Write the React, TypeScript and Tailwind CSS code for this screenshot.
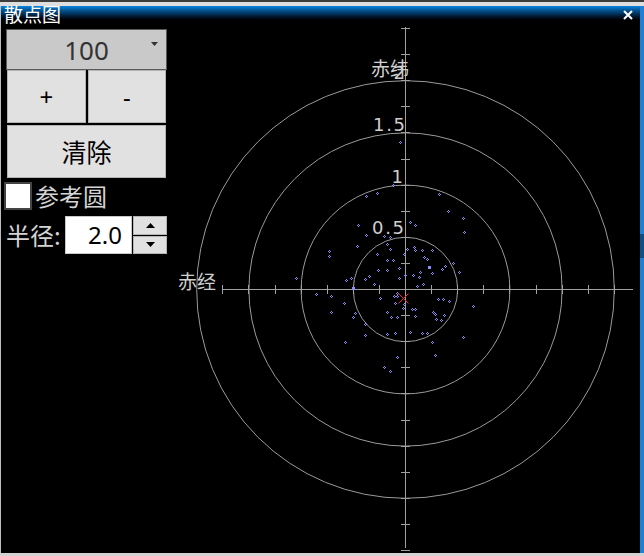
import React from "react";

const PTS: [number, number][] = [
  [400,142],[393,185],[366,196],[377,193],[439,194],[448,211],[463,218],[464,232],[358,225],[366,235],
  [410,222],[415,225],[384,236],[390,237],[329,251],[329,256],[357,246],[387,244],[390,249],[407,249],
  [414,247],[415,250],[422,250],[432,250],[377,254],[404,254],[424,257],[427,259],[387,260],[393,260],
  [453,263],[445,266],[399,268],[378,270],[387,270],[442,269],[420,272],[432,273],[459,272],[413,275],
  [405,275],[369,276],[365,279],[399,278],[419,277],[351,278],[346,280],[296,278],[423,284],[417,286],
  [374,284],[353,288],[316,294],[331,296],[380,298],[397,296],[395,303],[438,299],[443,299],[449,301],
  [344,303],[331,312],[355,313],[353,317],[412,309],[415,309],[403,308],[415,316],[387,312],[391,317],
  [397,317],[433,312],[435,314],[444,315],[404,304],[436,319],[441,320],[473,306],[463,337],[365,324],
  [365,335],[387,334],[395,333],[410,332],[422,333],[427,333],[345,342],[432,342],[435,355],[397,357],
  [384,367],[390,371],[394,296],[397,293],
];

const CX = 405;
const CY = 289;
const U = 26.1;

function Plot() {
  const ticksV: number[] = [];
  for (let k = -10; k <= 10; k++) if (k !== 0) ticksV.push(Math.round(CY + k * U));
  const ticksH: number[] = [];
  for (let k = -7; k <= 8; k++) if (k !== 0) ticksH.push(Math.round(CX + k * U));
  const dot = "#8c8cff";
  const gray = "#a0a0a0";
  return (
    <svg width={468} height={531} viewBox="171 22 468 531" className="block">
      <rect x={171} y={22} width={468} height={531} fill="#000" />
      {[1, 2, 3, 4].map((i) => (
        <circle key={i} cx={CX + 0.5} cy={CY + 0.5} r={i * 2 * U} fill="none" stroke="#9a9a9a" strokeWidth={1} />
      ))}
      <g shapeRendering="crispEdges" stroke={gray} strokeWidth={1}>
        <line x1={CX + 0.5} y1={27} x2={CX + 0.5} y2={548} />
        <line x1={222} y1={CY + 0.5} x2={633} y2={CY + 0.5} />
        {ticksV.map((y) => (
          <line key={"v" + y} x1={CX - 4} y1={y + 0.5} x2={CX + 5} y2={y + 0.5} />
        ))}
        {ticksH.map((x) => (
          <line key={"h" + x} x1={x + 0.5} y1={CY - 4} x2={x + 0.5} y2={CY + 5} />
        ))}
      </g>
      <g fill="#cfcfcf" style={{ fontFamily: '"DejaVu Sans", "Noto Sans CJK SC", sans-serif' }}>
        <text x={405} y={79} fontSize={18} textAnchor="end">2</text>
        <text x={373} y={131} fontSize={18} textLength={32} lengthAdjust="spacing">1.5</text>
        <text x={403} y={183} fontSize={18} textAnchor="end">1</text>
        <text x={372} y={234} fontSize={18} textLength={32} lengthAdjust="spacing">0.5</text>
      </g>
      <g fill="#cfcfcf" style={{ fontFamily: '"Noto Sans CJK SC", "Noto Sans", sans-serif' }}>
        <text x={371} y={76} fontSize={19}>赤纬</text>
        <text x={178} y={289} fontSize={19}>赤经</text>
      </g>
      <g fill={dot} shapeRendering="crispEdges">
        {PTS.map(([x, y], i) => (
          <g key={i}>
            <rect x={x} y={y - 1} width={1} height={1} />
            <rect x={x - 1} y={y} width={1} height={1} />
            <rect x={x + 1} y={y} width={1} height={1} />
            <rect x={x} y={y + 1} width={1} height={1} />
          </g>
        ))}
        <rect x={428} y={266} width={3} height={3} />
        <rect x={352} y={287} width={3} height={3} />
      </g>
      <g stroke="#ff2020" strokeWidth={1}>
        <line x1={398.5} y1={293.5} x2={408.5} y2={303.5} />
        <line x1={408.5} y1={293.5} x2={398.5} y2={303.5} />
      </g>
    </svg>
  );
}

export default function App() {
  const cjk = { fontFamily: '"Noto Sans CJK SC", "Noto Sans", sans-serif' };
  const latin = { fontFamily: '"Noto Sans", "Noto Sans CJK SC", sans-serif' };
  return (
    <div className="w-[644px] h-[556px] bg-black flex flex-col overflow-hidden">
      <div className="h-[6px] bg-[#dedede] border-t-2 border-[#3c3c3c]" />
      <div className="flex flex-1 min-h-0">
        <div className="w-[640px] flex flex-col border-l border-[#bdbdbd]">
          <div className="h-[16px] bg-gradient-to-b from-[#0a84e0] to-black flex items-center justify-between pl-[3px] pr-[7px]">
            <span className="text-white text-[19px] leading-[16px]" style={cjk}>散点图</span>
            <svg width={10} height={10} viewBox="0 0 10 10" className="mt-[2px]">
              <path d="M1 1 L9 9 M9 1 L1 9" stroke="#fff" strokeWidth={2} />
            </svg>
          </div>
          <div className="flex flex-1 min-h-0">
            <div className="w-[170px] flex flex-col pt-[7px] pl-[3px]">
              <div className="ml-[2px] w-[161px] h-[41px] border border-[#5a5a5a] bg-[#c9c9c9] relative flex items-center justify-center">
                <span className="text-[26px] text-[#333] leading-none" style={latin}>100</span>
                <svg width={7} height={4} viewBox="0 0 7 4" className="absolute right-[8px] top-[12px]">
                  <path d="M0 0 L7 0 L3.5 4 Z" fill="#333" />
                </svg>
              </div>
              <div className="ml-[3px] w-[159px] h-[53px] grid grid-cols-2 gap-[2px]">
                <div className="border border-[#b4b4b4] bg-[#e1e1e1] flex items-center justify-center text-[24px] text-black" style={latin}>+</div>
                <div className="border border-[#b4b4b4] bg-[#e1e1e1] flex items-center justify-center text-[24px] text-black" style={latin}>-</div>
              </div>
              <div className="ml-[3px] mt-[2px] w-[159px] h-[53px] border border-[#b4b4b4] bg-[#e1e1e1] flex items-center justify-center text-[25px] text-black" style={cjk}>清除</div>
              <div className="mt-[4px] flex items-center h-[28px]">
                <div className="w-[28px] h-[28px] bg-white border-2 border-[#444]" />
                <span className="ml-[3px] text-[24px] text-[#d4d4d4] leading-none" style={cjk}>参考圆</span>
              </div>
              <div className="mt-[6px] ml-[2px] flex items-center h-[38px]">
                <span className="text-[24px] text-[#d4d4d4] leading-none w-[59px]" style={cjk}>半径:</span>
                <div className="w-[67px] h-[38px] bg-white border border-[#c8c8c8] flex items-center justify-end pr-[9px]">
                  <span className="text-[24px] text-black leading-none" style={latin}>2.0</span>
                </div>
                <div className="ml-px w-[34px] h-[38px] flex flex-col gap-px">
                  <div className="flex-1 border border-[#b4b4b4] bg-[#e1e1e1] flex items-center justify-center">
                    <svg width={9} height={5} viewBox="0 0 9 5"><path d="M0 5 L9 5 L4.5 0 Z" fill="#000" /></svg>
                  </div>
                  <div className="flex-1 border border-[#b4b4b4] bg-[#e1e1e1] flex items-center justify-center">
                    <svg width={9} height={5} viewBox="0 0 9 5"><path d="M0 0 L9 0 L4.5 5 Z" fill="#000" /></svg>
                  </div>
                </div>
              </div>
            </div>
            <Plot />
          </div>
        </div>
        <div className="w-[4px] bg-[#1d7fd6] flex flex-col">
          <div className="h-[228px]" />
          <div className="h-[24px] bg-[#0e4f8a]" />
        </div>
      </div>
      <div className="h-[3px] bg-[#d2d2d2]" />
    </div>
  );
}
